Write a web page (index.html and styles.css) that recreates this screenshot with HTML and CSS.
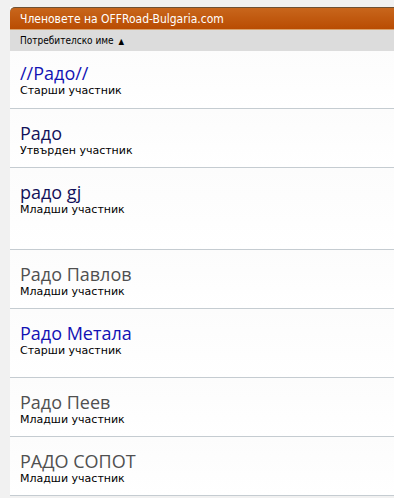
FILE: index.html
```html
<!DOCTYPE html>
<html lang="bg">
<head>
    <meta charset="UTF-8">
    <meta name="viewport" content="width=device-width, initial-scale=1.0">
    <title>Членовете на OFFRoad-Bulgaria.com</title>
    <link rel="stylesheet" href="styles.css">
</head>
<body>

<div class="container">
    <div class="title">Членовете на OFFRoad-Bulgaria.com</div>
    <div class="sort-bar">Потребителско име <span class="arrow">&#9650;</span></div>

    <div class="member first">
        <div class="name blue">//Радо//</div>
        <div class="rank">Старши участник</div>
    </div>
    <div class="member">
        <div class="name navy">Радо</div>
        <div class="rank">Утвърден участник</div>
    </div>
    <div class="member tall">
        <div class="name navy">радо gj</div>
        <div class="rank">Младши участник</div>
    </div>
    <div class="member">
        <div class="name grey">Радо Павлов</div>
        <div class="rank">Младши участник</div>
    </div>
    <div class="member mid">
        <div class="name blue">Радо Метала</div>
        <div class="rank">Старши участник</div>
    </div>
    <div class="member">
        <div class="name grey">Радо Пеев</div>
        <div class="rank">Младши участник</div>
    </div>
    <div class="member">
        <div class="name grey">РАДО СОПОТ</div>
        <div class="rank">Младши участник</div>
    </div>
</div>

</body>
</html>
```

FILE: styles.css
```css
body {
    margin: 0;
    padding: 7px 0 0 10px;
    background-color: #f1f1f1;
    overflow: hidden;
}
.container {
    background-color: #fff;
}
.title {
    height: 21px;
    line-height: 22px;
    padding-left: 10px;
    border-top: 1px solid #6e5134;
    border-bottom: 1px solid #d9a36f;
    border-top-left-radius: 5px;
    background: linear-gradient(#c8661c, #b94c02);
    color: #fff;
    font-family: "DejaVu Sans Condensed", "DejaVu Sans", sans-serif;
    font-size: 12px;
}
.sort-bar {
    height: 21px;
    line-height: 21px;
    padding-left: 10px;
    background-color: #dcdcdc;
    color: #000;
    font-family: "DejaVu Sans Condensed", "DejaVu Sans", sans-serif;
    font-size: 10px;
}
.arrow {
    font-size: 8px;
    margin-left: 2px;
}
.member {
    height: 45px;
    padding: 13px 0 0 10px;
    border-bottom: 1px solid #c5ccd1;
    background: linear-gradient(#fcfcfc, #fff);
}
.member.first {
    height: 46px;
    padding-top: 11px;
}
.member.tall {
    height: 68px;
}
.member.mid {
    height: 55px;
}
.name {
    font-family: "Open Sans", "Noto Sans", sans-serif;
    font-size: 18px;
    line-height: 22px;
}
.blue {
    color: #1212b4;
}
.navy {
    color: #12125a;
}
.grey {
    color: #505050;
}
.rank {
    font-family: "DejaVu Sans", sans-serif;
    font-size: 11px;
    line-height: 13px;
    color: #000;
}
```
